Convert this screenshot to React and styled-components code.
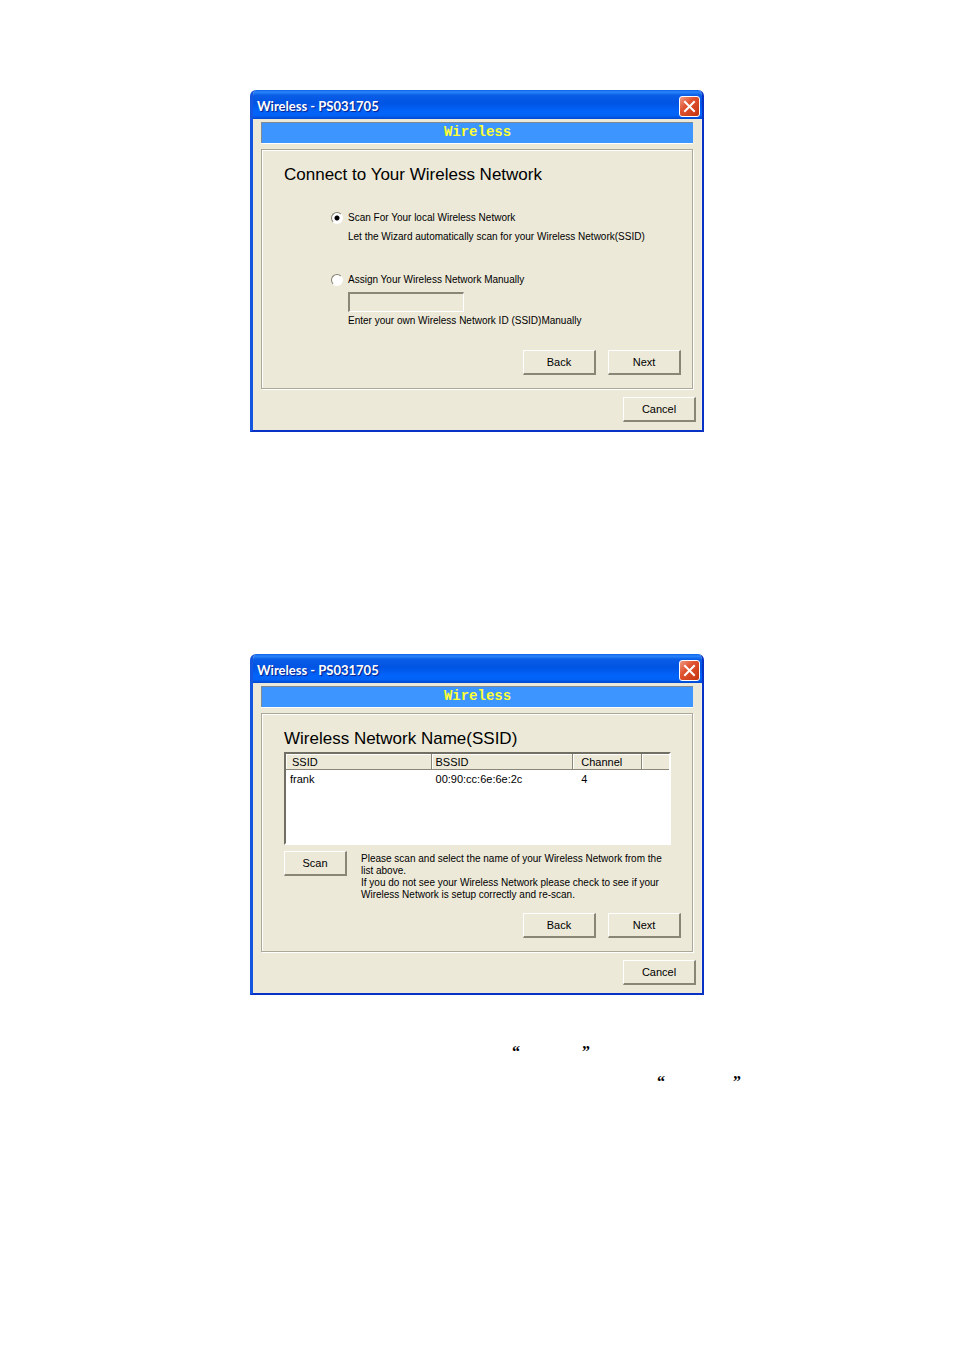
import React, { useId, useState } from "react";
import styled, { createGlobalStyle } from "styled-components";

const networks = [
  { ssid: "frank", bssid: "00:90:cc:6e:6e:2c", channel: "4" },
];

function Dialog({ title, banner, children }) {
  return (
    <Window>
      <TitleBar>
        <Title>{title}</Title>
        <CloseButton type="button" aria-label="Close">
          <svg width="13" height="13" viewBox="0 0 13 13">
            <path d="M2 2L11 11M11 2L2 11" stroke="#fff" strokeWidth="2" strokeLinecap="square" />
          </svg>
        </CloseButton>
      </TitleBar>
      <Body>
        <Banner>{banner}</Banner>
        <Panel>{children}</Panel>
        <Footer>
          <Button type="button">Cancel</Button>
        </Footer>
      </Body>
    </Window>
  );
}

function ConnectDialog() {
  const id = useId();
  const [mode, setMode] = useState("scan");
  const [ssid, setSsid] = useState("");

  return (
    <Dialog title="Wireless - PS031705" banner="Wireless">
      <Heading>Connect to Your Wireless Network</Heading>
      <Options>
        <Option>
          <Radio
            type="radio"
            name={id}
            id={`${id}scan`}
            checked={mode === "scan"}
            onChange={() => setMode("scan")}
          />
          <label htmlFor={`${id}scan`}>Scan For Your local Wireless Network</label>
          <Hint>Let the Wizard automatically scan for your Wireless Network(SSID)</Hint>
        </Option>
        <Option>
          <Radio
            type="radio"
            name={id}
            id={`${id}manual`}
            checked={mode === "manual"}
            onChange={() => setMode("manual")}
          />
          <label htmlFor={`${id}manual`}>Assign Your Wireless Network Manually</label>
          <Manual>
            <TextBox
              type="text"
              id={`${id}ssid`}
              value={ssid}
              disabled={mode !== "manual"}
              onChange={(e) => setSsid(e.target.value)}
            />
            <label htmlFor={`${id}ssid`}>Enter your own Wireless Network ID (SSID)Manually</label>
          </Manual>
        </Option>
      </Options>
      <Actions>
        <Button type="button">Back</Button>
        <Button type="button">Next</Button>
      </Actions>
    </Dialog>
  );
}

function NetworkDialog() {
  return (
    <Dialog title="Wireless - PS031705" banner="Wireless">
      <Heading>Wireless Network Name(SSID)</Heading>
      <ListBox>
        <Table>
          <colgroup>
            <col width="38%" />
            <col width="37%" />
            <col width="18%" />
            <col width="7%" />
          </colgroup>
          <thead>
            <tr>
              <th>SSID</th>
              <th>BSSID</th>
              <th>Channel</th>
              <td />
            </tr>
          </thead>
          <tbody>
            {networks.map((n) => (
              <tr key={n.bssid}>
                <td>{n.ssid}</td>
                <td>{n.bssid}</td>
                <td>{n.channel}</td>
                <td />
              </tr>
            ))}
          </tbody>
        </Table>
      </ListBox>
      <ScanRow>
        <Button type="button" $small>Scan</Button>
        <Note>
          Please scan and select the name of your Wireless Network from the
          <br />
          list above.
          <br />
          If you do not see your Wireless Network please check to see if your
          <br />
          Wireless Network is setup correctly and re-scan.
        </Note>
      </ScanRow>
      <Actions>
        <Button type="button">Back</Button>
        <Button type="button">Next</Button>
      </Actions>
    </Dialog>
  );
}

export default function App() {
  return (
    <>
      <GlobalStyle />
      <Page>
        <ConnectDialog />
        <NetworkDialog />
        <Quotes>
          <Quote $indent={262} $width={78}>
            <span>“</span>
            <span>”</span>
          </Quote>
          <Quote $indent={407} $width={84}>
            <span>“</span>
            <span>”</span>
          </Quote>
        </Quotes>
      </Page>
    </>
  );
}

const GlobalStyle = createGlobalStyle`
  * {
    box-sizing: border-box;
  }

  body {
    margin: 0;
    background: #fff;
    color: #000;
    font: 11px/14px "Liberation Sans", Arial, sans-serif;
  }
`;

const Page = styled.main`
  display: flex;
  flex-direction: column;
  align-items: center;
  padding: 90px 16px 40px;
`;

const Window = styled.section`
  width: 100%;
  max-width: 454px;
  background: #ece9d8;
  border: solid #0831c5;
  border-width: 0 2px 2px 3px;
  border-left-color: #1556e0;
  border-radius: 6px 6px 0 0;
  overflow: hidden;

  & + & {
    margin-top: 222px;
  }
`;

const TitleBar = styled.header`
  display: flex;
  align-items: center;
  justify-content: space-between;
  height: 29px;
  margin: 0 -2px 0 -3px;
  padding: 3px 4px 0 7px;
  background: linear-gradient(#0a5fe8 0%, #2b86fb 7%, #0a5de6 18%, #0054e3 45%, #0264fb 75%, #0262f5 88%, #0147cf 100%);
`;

const Title = styled.h2`
  margin: 0;
  color: #fff;
  font: bold 13px/16px Lato, "Liberation Sans", Arial, sans-serif;
  text-shadow: 1px 1px 1px #0a1e87;
`;

const CloseButton = styled.button`
  display: flex;
  align-items: center;
  justify-content: center;
  width: 21px;
  height: 21px;
  padding: 0;
  border: 1px solid #fff;
  border-radius: 3px;
  background: linear-gradient(135deg, #ee9a84, #e0522f 40%, #c5340f);
`;

const Body = styled.div`
  padding: 3px 5px 8px 8px;
  border-right: 1px solid #f5f1e6;
`;

const Banner = styled.div`
  height: 21px;
  margin-right: 3px;
  border: solid #7f8a96;
  border-width: 1px 0 0 1px;
  box-shadow: 0 1px #fff;
  background: #3d95ff;
  color: #ff3;
  font: bold 14px/18px "Liberation Mono", "Courier New", monospace;
  text-align: center;
`;

const Panel = styled.div`
  margin: 6px 3px 8px 0;
  padding: 16px 11px 13px 22px;
  border: 1px solid #aca899;
  box-shadow: inset 1px 1px #fff, 1px 1px #fff;
`;

const Heading = styled.h3`
  margin: 0;
  font: 17px/18px "Liberation Sans", Arial, sans-serif;
`;

const Options = styled.div`
  display: flex;
  flex-direction: column;
  gap: 29px;
  margin: 27px 0 22px 47px;
  font-size: 10px;
`;

const Option = styled.div`
  display: grid;
  grid-template-columns: 17px 1fr;
  align-items: center;
`;

const Radio = styled.input`
  appearance: none;
  width: 12px;
  height: 12px;
  margin: 0;
  border: 1px solid;
  border-color: #848072 #fff #fff #848072;
  border-radius: 50%;
  background: #fff;

  &:checked {
    background: radial-gradient(circle, #000 2px, #fff 3px);
  }
`;

const Hint = styled.p`
  grid-column: 2;
  margin: 5px 0 0;
`;

const Manual = styled.div`
  grid-column: 2;
  display: flex;
  flex-direction: column;
  align-items: flex-start;
  gap: 2px;
  margin-top: 5px;
`;

const TextBox = styled.input`
  width: 116px;
  height: 20px;
  padding: 2px;
  border: solid;
  border-width: 2px 1px 1px 2px;
  border-color: #8a8678 #fff #fff #8a8678;
  background: #ece9d8;
  font: inherit;
`;

const Button = styled.button`
  flex: none;
  width: ${(p) => (p.$small ? "63px" : "73px")};
  height: 25px;
  padding: 0;
  border: solid;
  border-width: 1px 2px 2px 1px;
  border-color: #fff #8a8675 #8a8675 #fff;
  background: #ece9d8;
  color: #000;
  font: inherit;
`;

const Actions = styled.div`
  display: flex;
  justify-content: flex-end;
  gap: 12px;
`;

const Footer = styled.footer`
  display: flex;
  justify-content: flex-end;
`;

const ListBox = styled.div`
  height: 93px;
  margin: 4px 10px 6px 0;
  border: 2px solid;
  border-color: #716f64 #fff #fff #716f64;
  background: #fff;
`;

const Table = styled.table`
  width: 100%;
  table-layout: fixed;
  border-collapse: separate;
  border-spacing: 0;
  text-align: left;

  th, td {
    height: 18px;
    padding: 0 0 0 4px;
    font-weight: normal;
  }

  thead th, thead td {
    height: 16px;
    background: #ece9d8;
    border-bottom: 1px solid #8a8678;
    border-right: 1px solid #8a8678;
    box-shadow: inset 1px 1px #fff;
  }

  thead th:first-child {
    padding-left: 6px;
  }

  th:nth-child(3), td:nth-child(3) {
    padding-left: 8px;
  }

  thead td {
    border-right: 0;
  }
`;

const ScanRow = styled.div`
  display: flex;
  gap: 14px;
  margin-bottom: 12px;
`;

const Note = styled.p`
  margin: 2px 0 0;
  font-size: 10px;
  line-height: 12px;
`;

const Quotes = styled.div`
  width: 100%;
  max-width: 454px;
  margin-top: 48px;
`;

const Quote = styled.p`
  display: flex;
  justify-content: space-between;
  width: ${(p) => p.$width}px;
  margin: 0 0 12px ${(p) => p.$indent}px;
  font: bold 16px/18px "Liberation Serif", "Times New Roman", serif;
`;
